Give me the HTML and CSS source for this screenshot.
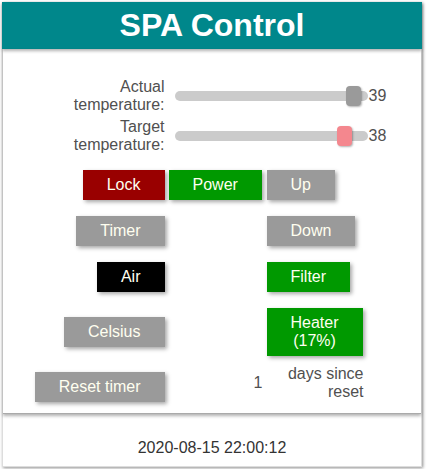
FILE: index.html
```html
<!DOCTYPE html>
<html lang="en">
<head>
<meta charset="utf-8">
<title>SPA Control</title>
<link rel="stylesheet" href="styles.css">
</head>
<body>
<div class="card">
  <header class="header">SPA Control</header>
  <main class="panel">
    <div class="grid sliders">
      <div class="label">Actual<br>temperature:</div>
      <div class="slider-cell">
        <div class="track"><div class="thumb thumb-actual" style="left:171px"></div></div>
        <span class="value">39</span>
      </div>
      <div class="label">Target<br>temperature:</div>
      <div class="slider-cell">
        <div class="track"><div class="thumb thumb-target" style="left:162px"></div></div>
        <span class="value">38</span>
      </div>
    </div>
    <div class="grid buttons">
      <div class="c1"><button class="btn red">Lock</button></div>
      <div class="c2"><button class="btn green">Power</button></div>
      <div class="c3"><button class="btn gray">Up</button></div>

      <div class="c1"><button class="btn gray">Timer</button></div>
      <div class="c2"></div>
      <div class="c3"><button class="btn gray">Down</button></div>

      <div class="c1"><button class="btn black">Air</button></div>
      <div class="c2"></div>
      <div class="c3"><button class="btn green">Filter</button></div>

      <div class="c1"><button class="btn gray">Celsius</button></div>
      <div class="c2"></div>
      <div class="c3"><button class="btn green">Heater<br>(17%)</button></div>

      <div class="c1"><button class="btn gray">Reset timer</button></div>
      <div class="c2 num">1</div>
      <div class="c3 note">days since reset</div>
    </div>
  </main>
  <footer class="footer">2020-08-15 22:00:12</footer>
</div>
</body>
</html>
```

FILE: styles.css
```css
html, body {
  margin: 0;
  padding: 0;
  background: #fff;
}
body {
  font-family: "Liberation Sans", Arial, sans-serif;
  color: #444;
}
.card {
  margin: 2px;
  width: 420px;
  height: 465px;
  box-sizing: border-box;
  border: 1px solid #ddd;
  box-shadow: 1px 1px 3px rgba(0,0,0,0.45);
  display: flex;
  flex-direction: column;
}
.header {
  background: #00878b;
  color: #fff;
  font-weight: bold;
  font-size: 32px;
  line-height: 47px;
  height: 47px;
  text-align: center;
  box-shadow: 0 2px 3px rgba(0,0,0,0.3);
  margin: -1px -1px 0 -1px;
}
.panel {
  padding: 29px 0 11px;
  border-bottom: 1px solid #aaa;
  box-shadow: 0 2px 3px rgba(0,0,0,0.3);
}
.grid {
  display: grid;
  grid-template-columns: 130px 94px 97px 22px;
  column-gap: 4px;
  justify-content: center;
}
.sliders {
  row-gap: 4px;
}
.label {
  font-size: 16px;
  line-height: 18px;
  text-align: right;
  justify-self: end;
  white-space: nowrap;
  color: #505050;
}
.slider-cell {
  grid-column: 2 / 5;
  display: flex;
  align-items: center;
  padding-left: 6px;
}
.track {
  position: relative;
  width: 193px;
  height: 10px;
  border-radius: 5px;
  background: #cbcbcb;
}
.thumb {
  position: absolute;
  top: -5px;
  width: 15px;
  height: 20px;
  border-radius: 4px;
  box-shadow: 1px 1px 2px rgba(0,0,0,0.3);
}
.thumb-actual { background: #9a9a9a; }
.thumb-target { background: #f4878e; }
.value {
  font-size: 16px;
  margin-left: 1px;
  color: #505050;
}
.buttons {
  margin-top: 16px;
  row-gap: 16px;
  align-items: center;
}
.c1 { grid-column: 1; justify-self: end; display: flex; }
.c2 { grid-column: 2; }
.c3 { grid-column: 3; display: flex; }
.btn {
  font-family: "Liberation Sans", Arial, sans-serif;
  font-size: 16px;
  line-height: 18px;
  padding: 6px 24px;
  border: none;
  margin: 0;
  color: #fffff0;
  box-shadow: 2px 2px 4px rgba(0,0,0,0.35);
  cursor: pointer;
}
.red { background: #990000; }
.green { background: #009900; }
.gray { background: #9a9a9a; }
.black { background: #000; }
.num {
  align-self: start;
  margin-top: -7px;
  font-size: 16px;
  line-height: 36px;
  text-align: right;
  color: #505050;
}
.note {
  align-self: start;
  margin-top: -7px;
  font-size: 16px;
  line-height: 18px;
  text-align: right;
  justify-content: flex-end;
  color: #505050;
}
.footer {
  padding-top: 25px;
  font-size: 16px;
  line-height: 18px;
  text-align: center;
  color: #333;
}
```
